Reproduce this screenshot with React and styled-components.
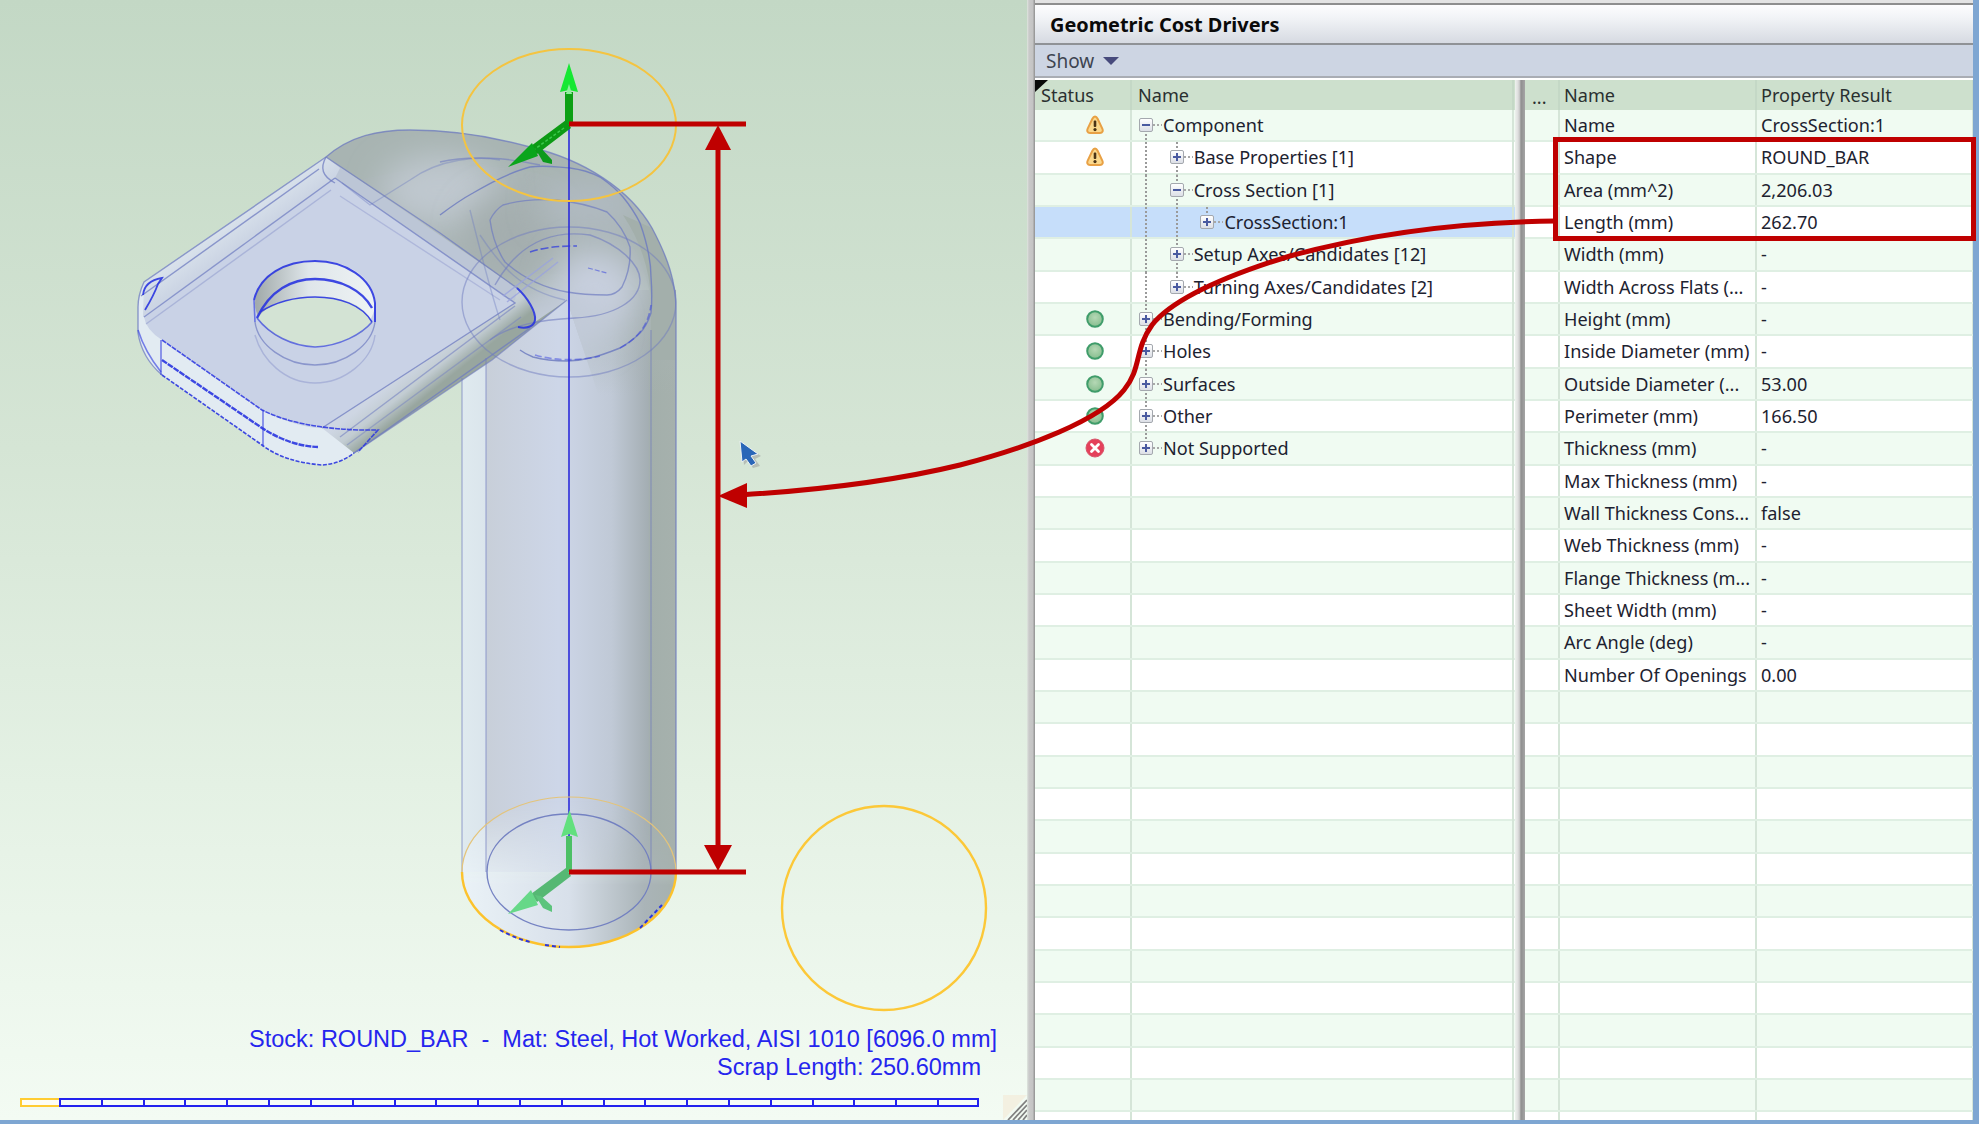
import React from "react";
import styled, { createGlobalStyle } from "styled-components";

const Global = createGlobalStyle`
  html, body { margin: 0; padding: 0; background: #7ea6d2; }
  body { width: 1979px; height: 1124px; overflow: hidden; }
  #root { width: 1979px; height: 1124px; }
`;

const Page = styled.div`
  position: relative;
  width: 1979px;
  height: 1124px;
  display: flex;
  flex-direction: column;
  background: #7ea6d2;
  overflow: hidden;
`;
const Main = styled.div`
  height: 1120px;
  display: flex;
  padding-right: 6px;
`;
const Viewport = styled.section`
  position: relative;
  flex: 0 0 1027px;
  display: flex;
  flex-direction: column;
  justify-content: flex-end;
  background: linear-gradient(180deg, #c3d8c5 0%, #d5e5d5 40%, #e4f1e4 70%, #f3fbf3 100%);
`;
const ModelCanvas = styled.svg`
  position: absolute;
  left: 0;
  top: 0;
`;
const StockInfo = styled.div`
  position: relative;
  display: flex;
  flex-direction: column;
  align-items: flex-end;
  padding-right: 30px;
  margin-bottom: 17px;
  font-family: "Liberation Sans", Arial, sans-serif;
  font-size: 23.5px;
  line-height: 27.5px;
  color: #2525ee;
`;
const StockLine = styled.div`
  white-space: pre;
  margin-right: ${(p) => p.$inset || 0}px;
`;
const Ruler = styled.div`
  position: relative;
  display: flex;
  margin: 0 0 13px 20px;
  height: 9px;
`;
const RulerStart = styled.div`
  width: 39px;
  box-sizing: border-box;
  border: 2px solid #ffcc33;
  border-right: none;
  background: #fdfdf6;
`;
const RulerSegment = styled.div`
  width: 41.82px;
  box-sizing: border-box;
  border: 2px solid #2222ee;
  border-right: none;
  background: #f6fcf8;
  &:last-child { border-right: 2px solid #2222ee; }
`;
const Grip = styled.svg`
  position: absolute;
  right: 0;
  bottom: 0;
`;
const Sash = styled.div`
  flex: 0 0 8px;
  background: linear-gradient(90deg, #dfe6df 0, #c9c9c9 25%, #c4c4c4 70%, #8f8f8f 100%);
`;
const Panel = styled.section`
  flex: 1;
  min-width: 0;
  display: flex;
  flex-direction: column;
  background: #fff;
  overflow: hidden;
`;
const TopEdge = styled.div`
  height: 5px;
  box-sizing: border-box;
  background: #e3e3e3;
  border-bottom: 2px solid #8e8e8e;
`;
const TitleBar = styled.header`
  height: 40px;
  box-sizing: border-box;
  display: flex;
  align-items: center;
  padding-left: 15px;
  background: linear-gradient(180deg, #fdfdfe 0%, #f1f3f6 35%, #d6dae2 100%);
  border-bottom: 2px solid #8f9296;
  font-family: "Noto Sans", sans-serif;
  font-weight: 700;
  font-size: 19.9px;
  color: #0a0a0a;
`;
const ShowBar = styled.div`
  height: 33px;
  box-sizing: border-box;
  display: flex;
  align-items: center;
  gap: 9px;
  padding-left: 11px;
  background: #cdd5e3;
  border-bottom: 2px solid #a9adb4;
  font-family: "Noto Sans", sans-serif;
  font-size: 19px;
  color: #3d4450;
`;
const ShowCaret = styled.span`
  width: 0;
  height: 0;
  border-left: 8px solid transparent;
  border-right: 8px solid transparent;
  border-top: 8px solid #474a7c;
`;
const Tables = styled.div`
  flex: 1;
  min-height: 0;
  display: flex;
  padding-top: 2px;
  overflow: hidden;
`;
const Table = styled.div`
  position: relative;
  flex: 0 0 ${(p) => p.$width}px;
  display: flex;
  flex-direction: column;
  font-family: "Noto Sans", sans-serif;
  font-size: 18.1px;
  color: #1d2230;
`;
const TableSash = styled.div`
  flex: 0 0 10px;
  background: linear-gradient(90deg, #eef2ee 0, #dedede 30%, #c8c8c8 45%, #8f8f8f 60%, #a5a5a5 100%);
`;
const Corner = styled.span`
  position: absolute;
  left: 0;
  top: 0;
  width: 0;
  height: 0;
  border-top: 12px solid #0a0a0a;
  border-right: 13px solid transparent;
`;
const HeaderRow = styled.div`
  flex: 0 0 30px;
  display: grid;
  grid-template-columns: ${(p) => p.$cols};
  background: #cde0cd;
`;
const HeaderCell = styled.div`
  box-sizing: border-box;
  display: flex;
  align-items: center;
  padding-left: ${(p) => p.$pad}px;
  border-right: 2px solid #c4d8c6;
  color: #2a3030;
  white-space: nowrap;
  overflow: hidden;
`;
const Row = styled.div`
  flex: 0 0 32.33px;
  height: 32.33px;
  box-sizing: border-box;
  display: grid;
  grid-template-columns: ${(p) => p.$cols};
  background: ${(p) => (p.$selected ? "#c6defa" : p.$odd ? "#fff" : "#f0fbf2")};
  border-bottom: 2px solid #dfefe3;
`;
const Cell = styled.div`
  box-sizing: border-box;
  display: flex;
  align-items: center;
  padding-left: ${(p) => p.$pad || 0}px;
  border-right: 2px solid #d5e5d8;
  white-space: nowrap;
  overflow: hidden;
  min-width: 0;
`;
const TreeCell = styled.div`
  box-sizing: border-box;
  display: flex;
  align-items: stretch;
  border-right: 2px solid #d5e5d8;
  white-space: nowrap;
  overflow: hidden;
  margin-bottom: -2px;
`;
const dots = "repeating-linear-gradient(180deg, #9a9a9a 0 2px, transparent 2px 4px)";
const Indent = styled.span`
  flex: 0 0 30.7px;
  background-image: ${(p) => (p.$line ? dots : "none")};
  background-size: 2px 100%;
  background-position: 13px 0;
  background-repeat: no-repeat;
`;
const ExpanderSlot = styled.span`
  position: relative;
  flex: 0 0 31px;
  background-image: ${(p) => (p.$up ? dots : "none")}, ${(p) => (p.$down ? dots : "none")};
  background-size: 2px 50%, 2px 50%;
  background-position: 13px 0, 13px 100%;
  background-repeat: no-repeat;
  &::after {
    content: "";
    position: absolute;
    left: 21px;
    top: 50%;
    margin-top: -2px;
    width: 9px;
    height: 2px;
    background: repeating-linear-gradient(90deg, #a8a8a8 0 2px, transparent 2px 4px);
  }
`;
const ExpanderBox = styled.span`
  position: absolute;
  left: 7px;
  top: 50%;
  margin-top: -8px;
  width: 14px;
  height: 14px;
  box-sizing: border-box;
  border: 1.5px solid #a4a8ae;
  border-radius: 2px;
  background: linear-gradient(180deg, #ffffff, #dcdfe6);
  &::before {
    content: "";
    position: absolute;
    left: 2px;
    right: 2px;
    top: 50%;
    height: 2px;
    margin-top: -1px;
    background: #4a5aa0;
  }
  &::after {
    content: "";
    display: ${(p) => (p.$open ? "none" : "block")};
    position: absolute;
    top: 2px;
    bottom: 2px;
    left: 50%;
    width: 2px;
    margin-left: -1px;
    background: #4a5aa0;
  }
`;
const TreeLabel = styled.span`
  align-self: center;
  margin-bottom: 2px;
`;
const Overlay = styled.svg`
  position: absolute;
  left: 0;
  top: 0;
  pointer-events: none;
`;
const Dots = styled.span`
  padding-top: 4px;
`;

const StatusIcon = ({ kind }) => {
  if (kind === "warn")
    return (
      <svg width="18" height="20" viewBox="0 0 18 20">
        <path d="M9 1.5 C7.6 1.5 7 2.5 6.4 3.7 L1.7 13.6 C0.7 15.8 1.4 18 4 18 H14 C16.6 18 17.3 15.8 16.3 13.6 L11.6 3.7 C11 2.5 10.4 1.5 9 1.5Z" fill="#fbd88c" stroke="#e8a044" strokeWidth="2" />
        <rect x="7.7" y="5.5" width="2.6" height="6.6" rx="1" fill="#4a3214" />
        <circle cx="9" cy="14.6" r="1.6" fill="#4a3214" />
      </svg>
    );
  if (kind === "err")
    return (
      <svg width="20" height="20" viewBox="0 0 20 20">
        <circle cx="10" cy="10" r="9" fill="#e4405a" stroke="#d8566c" strokeWidth="1" />
        <path d="M6.5 6.5 L13.5 13.5 M13.5 6.5 L6.5 13.5" stroke="#fff" strokeWidth="2.8" strokeLinecap="round" />
      </svg>
    );
  return (
    <svg width="20" height="20" viewBox="0 0 20 20">
      <defs>
        <radialGradient id="okBall" cx="50%" cy="40%" r="60%">
          <stop offset="0" stopColor="#b5d8b5" />
          <stop offset="1" stopColor="#86bd8e" />
        </radialGradient>
      </defs>
      <circle cx="10" cy="10" r="7.8" fill="url(#okBall)" stroke="#3f9c6a" strokeWidth="2" />
    </svg>
  );
};

const tree = [
  { label: "Component", status: "warn", open: true, down: true },
  { label: "Base Properties [1]", status: "warn", lines: [1], up: true, down: true },
  { label: "Cross Section [1]", open: true, lines: [1], up: true, down: true },
  { label: "CrossSection:1", lines: [1, 1], up: true, selected: true },
  { label: "Setup Axes/Candidates [12]", lines: [1], up: true, down: true },
  { label: "Turning Axes/Candidates [2]", lines: [1], up: true },
  { label: "Bending/Forming", status: "ok", up: true, down: true },
  { label: "Holes", status: "ok", up: true, down: true },
  { label: "Surfaces", status: "ok", up: true, down: true },
  { label: "Other", status: "ok", up: true, down: true },
  { label: "Not Supported", status: "err", up: true },
];

const props = [
  ["Name", "CrossSection:1"],
  ["Shape", "ROUND_BAR"],
  ["Area (mm^2)", "2,206.03"],
  ["Length (mm)", "262.70"],
  ["Width (mm)", "-"],
  ["Width Across Flats (...", "-"],
  ["Height (mm)", "-"],
  ["Inside Diameter (mm)", "-"],
  ["Outside Diameter (...", "53.00"],
  ["Perimeter (mm)", "166.50"],
  ["Thickness (mm)", "-"],
  ["Max Thickness (mm)", "-"],
  ["Wall Thickness Cons...", "false"],
  ["Web Thickness (mm)", "-"],
  ["Flange Thickness (m...", "-"],
  ["Sheet Width (mm)", "-"],
  ["Arc Angle (deg)", "-"],
  ["Number Of Openings", "0.00"],
];

const ROWS = 32;
const leftCols = "97px 382px";
const rightCols = "35px 197px 217px";
const wire = "#6f7cc0";
const elbowOutline = "M326 157 C350 136 378 130 410 130 C450 130 490 136 530 147 C585 160 630 190 652 228 C668 258 676 282 676 310";

const Model = () => (
  <ModelCanvas width="1027" height="1120" viewBox="0 0 1027 1120">
    <defs>
      <linearGradient id="tube" x1="462" x2="676" y1="0" y2="0" gradientUnits="userSpaceOnUse">
        <stop offset="0" stopColor="#dfeaef" />
        <stop offset="0.11" stopColor="#dbe5ec" />
        <stop offset="0.115" stopColor="#c8cfd9" />
        <stop offset="0.45" stopColor="#cdd6e8" />
        <stop offset="0.7" stopColor="#c0c9d6" />
        <stop offset="0.87" stopColor="#a4aeb3" />
        <stop offset="0.88" stopColor="#a3afab" />
        <stop offset="1" stopColor="#a6b1ad" />
      </linearGradient>
      <linearGradient id="capFill" x1="462" x2="676" y1="0" y2="0" gradientUnits="userSpaceOnUse">
        <stop offset="0" stopColor="#eaf2f7" />
        <stop offset="0.5" stopColor="#d8e0ea" />
        <stop offset="0.85" stopColor="#aab4b8" />
        <stop offset="1" stopColor="#a6b1ae" />
      </linearGradient>
      <linearGradient id="capFade" x1="0" x2="0" y1="800" y2="885" gradientUnits="userSpaceOnUse">
        <stop offset="0" stopColor="#000" />
        <stop offset="1" stopColor="#fff" />
      </linearGradient>
      <mask id="capMask" maskUnits="userSpaceOnUse" x="440" y="780" width="260" height="180">
        <rect x="440" y="780" width="260" height="180" fill="url(#capFade)" />
      </mask>
      <linearGradient id="elbowFade" x1="0" x2="0" y1="270" y2="395" gradientUnits="userSpaceOnUse">
        <stop offset="0" stopColor="#a9b4b4" stopOpacity="1" />
        <stop offset="1" stopColor="#a9b4b4" stopOpacity="0" />
      </linearGradient>
      <linearGradient id="edgeStrip" x1="420" y1="360" x2="440" y2="385" gradientUnits="userSpaceOnUse">
        <stop offset="0" stopColor="#ced6e3" />
        <stop offset="0.5" stopColor="#c2ccd2" />
        <stop offset="1" stopColor="#98a69f" />
      </linearGradient>
      <linearGradient id="flangeRim" x1="225" y1="212" x2="245" y2="240" gradientUnits="userSpaceOnUse">
        <stop offset="0" stopColor="#dfe8ef" />
        <stop offset="1" stopColor="#ccd5e4" />
      </linearGradient>
      <linearGradient id="holeWall" x1="254" x2="375" y1="0" y2="0" gradientUnits="userSpaceOnUse">
        <stop offset="0" stopColor="#9fa8a8" />
        <stop offset="0.45" stopColor="#dfe6ea" />
        <stop offset="1" stopColor="#eef3f4" />
      </linearGradient>
      <clipPath id="elbowClip">
        <path d={`${elbowOutline} L676 400 L600 400 L567 300 L492 360 L326 200 Z`} />
      </clipPath>
      <filter id="soft" x="-40%" y="-40%" width="180%" height="180%">
        <feGaussianBlur stdDeviation="16" />
      </filter>
    </defs>

    {/* tube */}
    <rect x="462" y="290" width="214" height="582" fill="url(#tube)" />

    {/* elbow with soft shading */}
    <path d={`${elbowOutline} L676 400 L600 400 L567 300 L492 360 L326 200 Z`} fill="url(#elbowFade)" />
    <path d={`${elbowOutline} L651 300 C640 230 590 180 520 170 C460 160 400 170 360 180 Z`} fill="#a8b4b2" />
    <g clipPath="url(#elbowClip)">
      <ellipse cx="440" cy="190" rx="60" ry="35" fill="#bfc8cf" filter="url(#soft)" />
      <ellipse cx="510" cy="235" rx="45" ry="40" fill="#a4aeaf" filter="url(#soft)" />
      <ellipse cx="590" cy="205" rx="50" ry="25" fill="#b0bac1" filter="url(#soft)" />
      <ellipse cx="595" cy="290" rx="42" ry="40" fill="#c7cfde" filter="url(#soft)" />
      <ellipse cx="560" cy="325" rx="50" ry="28" fill="#c2cbd9" filter="url(#soft)" />
      <path d="M652 228 C668 258 676 282 676 310 L676 360 L651 360 L651 300 C650 270 640 240 623 215 Z" fill="#a3afab" />
    </g>

    {/* bottom cap */}
    <ellipse cx="569" cy="872" rx="107" ry="75" fill="url(#capFill)" mask="url(#capMask)" />

    {/* flange */}
    <path d="M326 157 L144 282 Q138 295 138 307 L138 333 Q142 358 162 375 L262 445 Q284 462 322 465 Q340 464 354 453 L492 360 L515 303 Z" fill="#e2ebf2" />
    <path d="M326 157 L517 288 L515 303 L335 178 Z" fill="#bcc6d6" />
    <path d="M515 300 L322 428 L354 453 L492 360 L567 300 L535 322 C536 312 528 298 517 288 Z" fill="url(#edgeStrip)" />
    <path d="M326 157 L144 282 L143 317 L335 178 L340 168 Z" fill="url(#flangeRim)" />
    <path d="M335 178 L515 303 L322 428 Q298 428 262 410 L162 340 Q146 330 144 317 Z" fill="#c9d2e6" />

    {/* hole */}
    <ellipse cx="315" cy="303" rx="60" ry="43" fill="url(#holeWall)" />
    <path d="M257 318 C270 302 292 297 315 297 C340 297 362 302 372 322 C366 334 340 346 315 347 C292 346 270 335 257 318Z" fill="#d3e3d4" />

    {/* wireframe lines */}
    <g fill="none" stroke={wire} strokeWidth="1.4" strokeOpacity="0.75">
      <path d={`${elbowOutline} L676 872`} />
      <path d="M462 378 L462 872 M486 358 L486 872 M651 330 L651 872" strokeOpacity="0.5" />
      <path d="M326 157 L144 282 Q138 295 138 307 L138 333 Q142 358 162 375" />
      <path d="M326 157 L440 233 L517 288" />
      <path d="M326 157 C320 168 322 176 335 183" />
      <path d="M335 178 L515 303 L322 428" />
      <path d="M319 169 L141 296" />
      <path d="M335 178 L144 317" />
      <path d="M331 190 L146 324" strokeOpacity="0.35" />
      <path d="M342 183 L370 205 L410 180 C440 158 480 156 500 160" strokeOpacity="0.4" />
      <path d="M340 196 L500 300" strokeOpacity="0.3" />
      <path d="M530 328 L354 453" />
      <path d="M515 306 L340 437" strokeOpacity="0.55" />
      <path d="M521 317 L347 445" strokeOpacity="0.45" />
      <path d="M567 300 L492 360 L354 453" strokeOpacity="0.6" />
      <path d="M440 215 C452 206 462 199 473 193 C490 183 510 172 530 167 C545 165 555 167 570 168 C585 170 592 173 600 177 C610 184 617 190 623 197 C632 208 636 215 640 223 C646 240 651 258 651 277 C652 290 652 302 651 313 C648 322 645 328 640 333 C633 340 627 344 620 348 C610 352 600 356 590 358 C582 360 575 361 567 361 C555 361 544 360 533 357 C528 355 524 353 520 350" strokeOpacity="0.85" />
      <ellipse cx="569" cy="302" rx="107" ry="75" strokeOpacity="0.5" />
      <path d="M490 220 C494 212 498 208 503 205 C520 200 540 199 557 200 C575 202 592 206 607 212 C618 222 626 235 630 247 C631 262 627 277 622 287 C618 292 612 295 607 295 C590 295 578 294 567 292 C545 288 525 280 505 262 C497 250 492 235 490 220" strokeOpacity="0.7" />
      <path d="M495 285 C520 240 555 230 590 235 C620 245 640 265 640 280 C640 300 615 316 575 318 C540 320 510 325 490 340" strokeOpacity="0.6" />
      <path d="M440 162 C470 155 510 158 540 165" strokeOpacity="0.6" />
      <path d="M480 235 C500 265 520 290 565 300 M470 210 C480 250 490 290 500 320" strokeOpacity="0.4" />
      <path d="M503 296 L553 258 M507 302 L558 262" stroke="#9aa3de" strokeOpacity="0.8" />
      <path d="M255 335 C262 360 285 383 315 383 C345 383 372 360 375 335" strokeOpacity="0.35" />
      <path d="M255 322 C258 345 285 365 315 365 C345 365 372 345 375 322" strokeOpacity="0.7" />
      <ellipse cx="569" cy="872" rx="82" ry="58" strokeOpacity="0.95" />
    </g>

    {/* strong blue outline */}
    <g fill="none" stroke="#2a35e0" strokeWidth="1.6" strokeOpacity="0.9">
      <path d="M254 300 C260 275 285 261 315 261 C345 261 372 278 375 303 L375 322" strokeWidth="2" />
      <path d="M254 300 L255 322" strokeOpacity="0.6" />
      <path d="M257 318 C270 290 292 279 315 279 C340 279 362 290 372 308" strokeWidth="2.4" />
      <path d="M260 312 C276 302 292 297 315 297 C340 297 362 305 372 322" />
      <path d="M257 318 C270 335 292 346 315 347 C340 346 362 334 372 322" strokeOpacity="0.65" />
      <path d="M162 340 L262 410 Q298 428 360 430 L378 430 L358 452" strokeDasharray="5 1" strokeOpacity="0.85" />
      <path d="M162 360 L262 428 Q290 446 318 447" strokeWidth="2.4" strokeDasharray="6 1" />
      <path d="M162 375 L262 445 Q284 462 322 465 Q340 464 354 453" strokeDasharray="4 1.5" />
      <path d="M161 340 L161 375 M263 410 L263 445" strokeOpacity="0.6" />
      <path d="M143 295 C144 285 150 280 162 278 L158 284 C154 295 148 305 145 310" strokeWidth="1.8" />
      <path d="M517 288 C528 298 536 312 535 320 C534 326 528 329 518 327" strokeWidth="2" />
      <path d="M138 330 Q145 352 161 372" strokeOpacity="0.6" />
      <path d="M530 252 C545 247 560 246 577 246" strokeDasharray="8 3" strokeOpacity="0.7" />
      <path d="M588 268 L607 273" strokeDasharray="5 2" strokeOpacity="0.5" strokeWidth="1.2" />
      <path d="M535 355 C555 361 580 361 600 356 M620 348 C635 340 648 328 651 305" strokeDasharray="7 3" strokeOpacity="0.45" />
    </g>

    {/* centre line */}
    <line x1="569" y1="124" x2="569" y2="872" stroke="#2b2bdb" strokeWidth="1.6" />

    {/* gizmo circles */}
    <ellipse cx="569" cy="125" rx="107" ry="76" fill="none" stroke="#f4c441" strokeWidth="2" />
    <path d="M462 872 A107 75 0 0 1 676 872" fill="none" stroke="#e4c47a" strokeWidth="1.2" />
    <path d="M462 872 A107 75 0 0 0 676 872" fill="none" stroke="#fcc22c" strokeWidth="2.4" />
    <path d="M500 930 A107 75 0 0 0 530 942 M545 945 L560 947 M640 928 L662 905" fill="none" stroke="#2a35e0" strokeWidth="2" strokeDasharray="4 3" />
    <circle cx="884" cy="908" r="102" fill="none" stroke="#fcc838" strokeWidth="2.4" />

    {/* top axes */}
    <path d="M565 92 H573 V124 H565 Z" fill="#0ca014" />
    <path d="M569 63 L578 92 L569 90 L560 92 Z" fill="#16e833" />
    <path d="M566 94 H572 L569 84Z" fill="#8ff09c" />
    <path d="M566 120 L571 128 L537 154 L531 146 Z" fill="#0c9a14" />
    <path d="M564 128 L535 149" stroke="#3cc94c" strokeWidth="1.5" strokeDasharray="3 2" />
    <path d="M508 167 L532 143 L538 156 Z" fill="#0aa51c" />
    <path d="M535 148 L541 148 L552 160 L552 164 L543 162 Z" fill="#0c9a1c" />

    {/* bottom axes */}
    <path d="M566 836 H572 V872 H566 Z" fill="#4cc066" />
    <path d="M569.5 810 L578 837 L569.5 834 L561 837 Z" fill="#62e07e" />
    <path d="M566 868 L571 876 L537 902 L531 894 Z" fill="#55b873" />
    <path d="M508 914 L531 890 L538 905 Z" fill="#66d888" />
    <path d="M535 895 L541 896 L552 906 L552 912 L543 908 Z" fill="#5cc47c" />
  </ModelCanvas>
);

const Annotations = () => (
  <Overlay width="1979" height="1124" viewBox="0 0 1979 1124">
    <g stroke="#bf0000" fill="none" strokeWidth="5">
      <path d="M569 124 H746 M569 872 H746" />
      <path d="M718 140 V850" />
      <rect x="1555.5" y="139.5" width="418" height="99" />
      <path d="M1556 221 C1460 222 1370 234 1290 256 C1225 276 1172 300 1152 325 C1134 350 1142 368 1124 390 C1100 420 1030 447 960 465 C890 482 820 490 740 495" />
    </g>
    <g fill="#bf0000">
      <path d="M718 125 L731 150 H705 Z" />
      <path d="M718 871 L704 845 H732 Z" />
      <path d="M718 496 L747 483 L747 508 Z" />
    </g>
    <path d="M742 444 L761 456 L755 459 L760 466 L753 468 L748 461 L744 465 Z" fill="#a8aca8" opacity="0.7" />
    <path d="M740 441 L758 454 L751 456 L756 463 L751 466 L746 459 L742 462 Z" fill="#2a66b8" stroke="#eef2f4" strokeWidth="1" />
  </Overlay>
);

export default function App() {
  return (
    <Page>
      <Global />
      <Main>
        <Viewport>
          <Model />
          <StockInfo>
            <StockLine>Stock: ROUND_BAR  -  Mat: Steel, Hot Worked, AISI 1010 [6096.0 mm]</StockLine>
            <StockLine $inset={16}>Scrap Length: 250.60mm</StockLine>
          </StockInfo>
          <Ruler>
            <RulerStart />
            {Array.from({ length: 22 }, (_, i) => (
              <RulerSegment key={i} />
            ))}
          </Ruler>
          <Grip width="24" height="25" viewBox="0 0 24 25">
            <path d="M0 0 H24 L0 25 Z" fill="#f3eedc" opacity="0.8" />
            <path d="M24 5 L5 25 M24 10 L10 25 M24 15 L15 25 M24 20 L20 25" stroke="#808080" strokeWidth="1.8" />
          </Grip>
        </Viewport>
        <Sash />
        <Panel>
          <TopEdge />
          <TitleBar>Geometric Cost Drivers</TitleBar>
          <ShowBar>
            Show <ShowCaret />
          </ShowBar>
          <Tables>
            <Table $width={480}>
              <Corner />
              <HeaderRow $cols={leftCols}>
                <HeaderCell $pad={6}>Status</HeaderCell>
                <HeaderCell $pad={6}>Name</HeaderCell>
              </HeaderRow>
              {Array.from({ length: ROWS }, (_, i) => {
                const t = tree[i];
                return (
                  <Row key={i} $cols={leftCols} $odd={i % 2 === 1} $selected={t && t.selected}>
                    <Cell $pad={t && t.status === "warn" ? 51 : 50}>{t && t.status ? <StatusIcon kind={t.status} /> : null}</Cell>
                    <TreeCell>
                      {t ? (
                        <>
                          {(t.lines || []).map((l, k) => (
                            <Indent key={k} $line={l} />
                          ))}
                          <ExpanderSlot $up={t.up} $down={t.down}>
                            <ExpanderBox $open={t.open} />
                          </ExpanderSlot>
                          <TreeLabel>{t.label}</TreeLabel>
                        </>
                      ) : null}
                    </TreeCell>
                  </Row>
                );
              })}
            </Table>
            <TableSash />
            <Table $width={449}>
              <HeaderRow $cols={rightCols}>
                <HeaderCell $pad={7}><Dots>...</Dots></HeaderCell>
                <HeaderCell $pad={4}>Name</HeaderCell>
                <HeaderCell $pad={4}>Property Result</HeaderCell>
              </HeaderRow>
              {Array.from({ length: ROWS }, (_, i) => {
                const p = props[i];
                return (
                  <Row key={i} $cols={rightCols} $odd={i % 2 === 1}>
                    <Cell />
                    <Cell $pad={4}>{p ? p[0] : null}</Cell>
                    <Cell $pad={4}>{p ? p[1] : null}</Cell>
                  </Row>
                );
              })}
            </Table>
          </Tables>
        </Panel>
      </Main>
      <Annotations />
    </Page>
  );
}
